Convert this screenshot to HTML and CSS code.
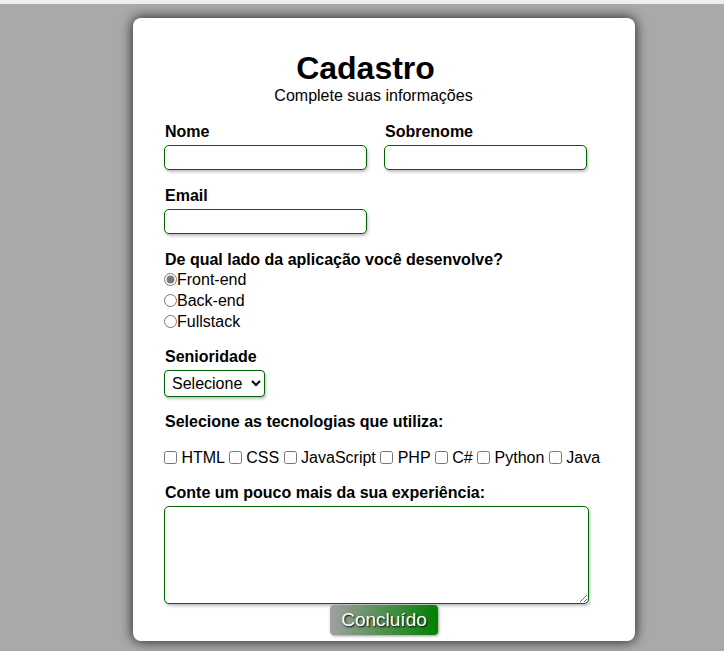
FILE: index.html
```html
<!DOCTYPE html>
<html lang="pt-BR">
<head>
<meta charset="utf-8">
<title>Cadastro</title>
<link rel="stylesheet" href="styles.css">
</head>
<body>
<div class="topbar"></div>
<main class="page">
  <form class="card">
    <header class="head">
      <h1 class="title">Cadastro</h1>
      <p class="subtitle">Complete suas informações</p>
    </header>

    <div class="row">
      <div class="field">
        <label class="label" for="nome">Nome</label>
        <input class="text" id="nome" type="text">
      </div>
      <div class="field">
        <label class="label" for="sobrenome">Sobrenome</label>
        <input class="text" id="sobrenome" type="text">
      </div>
    </div>

    <div class="field email">
      <label class="label" for="email">Email</label>
      <input class="text" id="email" type="email">
    </div>

    <fieldset class="group">
      <div class="label">De qual lado da aplicação você desenvolve?</div>
      <label class="radio"><input type="radio" name="lado" checked>Front-end</label>
      <label class="radio"><input type="radio" name="lado">Back-end</label>
      <label class="radio"><input type="radio" name="lado">Fullstack</label>
    </fieldset>

    <div class="senior">
      <label class="label" for="senioridade">Senioridade</label>
      <select class="select" id="senioridade">
        <option>Selecione</option>
        <option>Júnior</option>
        <option>Pleno</option>
        <option>Sênior</option>
      </select>
    </div>

    <div class="techs">
      <div class="label">Selecione as tecnologias que utiliza:</div>
      <div class="checks"><input type="checkbox"> HTML <input type="checkbox"> CSS <input type="checkbox"> JavaScript <input type="checkbox"> PHP <input type="checkbox"> C# <input type="checkbox"> Python <input type="checkbox"> Java</div>
    </div>

    <div class="exp">
      <label class="label" for="exp">Conte um pouco mais da sua experiência:</label>
      <textarea class="area" id="exp"></textarea>
    </div>

    <div class="actions">
      <button class="btn" type="button">Concluído</button>
    </div>
  </form>
</main>
</body>
</html>
```

FILE: styles.css
```css
html, body {
  margin: 0;
  padding: 0;
}

body {
  font-family: "Liberation Sans", Arial, sans-serif;
  color: #000;
  background: #eeeeee;
}

.topbar {
  height: 4px;
  background: #eeeeee;
}

.page {
  background: #a9a9a9;
  min-height: calc(100vh - 4px);
  overflow: hidden;
  padding-top: 14px;
  box-sizing: border-box;
}

.card {
  width: 502px;
  margin-left: 133px;
  box-sizing: border-box;
  background: #fff;
  border-radius: 8px;
  box-shadow: 0 0 12px 1px rgba(0, 0, 0, 0.75);
  padding: 32px 31px 6px 31px;
}

.head {
  text-align: center;
}

.title {
  margin: 0;
  font-size: 32px;
  font-weight: bold;
  line-height: normal;
  padding-right: 37px;
}

.subtitle {
  margin: 0;
  font-size: 16px;
  padding-right: 21px;
}

.label {
  display: block;
  font-size: 16px;
  font-weight: bold;
  padding-left: 1px;
}

.row {
  display: flex;
  gap: 17px;
  margin-top: 18px;
}

.field .label {
  margin-bottom: 4px;
}

.text {
  display: block;
  width: 203px;
  height: 25px;
  box-sizing: border-box;
  margin: 0;
  border: 1px solid #006400;
  border-radius: 5px;
  box-shadow: 1px 2px 3px rgba(0, 0, 0, 0.25);
  background: #fff;
  font: 16px "Liberation Sans", Arial, sans-serif;
  padding: 0 4px;
}

.email {
  margin-top: 17px;
}

.group {
  border: 0;
  margin: 17px 0 0;
  padding: 0;
  min-width: 0;
}

.radio {
  display: block;
  font-size: 16px;
  line-height: 21px;
}

.radio input {
  margin: 0;
  width: 13px;
  height: 13px;
  vertical-align: -1px;
  accent-color: #7a7a7a;
}

.senior {
  margin-top: 16px;
}

.select {
  display: block;
  margin-top: 4px;
  width: 101px;
  height: 27px;
  box-sizing: border-box;
  border: 1px solid #006400;
  border-radius: 4px;
  box-shadow: 1px 2px 3px rgba(0, 0, 0, 0.25);
  background: #fff;
  color: #000;
  font: 16px "Liberation Sans", Arial, sans-serif;
  padding: 0 0 0 3px;
}

.techs {
  margin-top: 16px;
}

.checks {
  margin-top: 18px;
  font-size: 16px;
}

.checks input {
  margin: 0;
  width: 13px;
  height: 13px;
  vertical-align: -1px;
}

.exp {
  margin-top: 17px;
}

.exp .label {
  margin-bottom: 4px;
}

.area {
  display: block;
  width: 425px;
  height: 98px;
  box-sizing: border-box;
  margin: 0;
  border: 1px solid #006400;
  border-radius: 5px;
  box-shadow: 1px 2px 3px rgba(0, 0, 0, 0.25);
  font: 16px "Liberation Sans", Arial, sans-serif;
}

.actions {
  text-align: center;
  margin-top: 1px;
}

.btn {
  height: 30px;
  padding: 0 11px;
  border: 0;
  border-radius: 4px;
  background: linear-gradient(to right, #a0a0a0, #008000);
  color: #fff;
  font: 19px "Liberation Sans", Arial, sans-serif;
  text-shadow: 1px 1px 2px #000;
  box-shadow: 1px 1px 3px rgba(0, 0, 0, 0.4);
  cursor: pointer;
}
```
